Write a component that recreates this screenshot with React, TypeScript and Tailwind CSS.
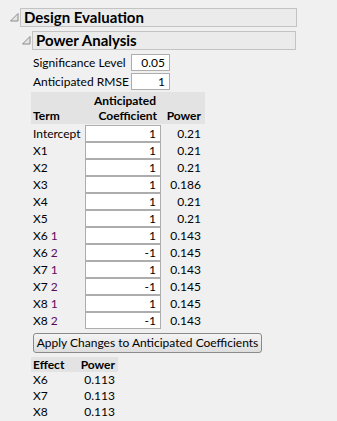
import React from "react";

const rows: { term: string; level?: string; coef: string; power: string }[] = [
  { term: "Intercept", coef: "1", power: "0.21" },
  { term: "X1", coef: "1", power: "0.21" },
  { term: "X2", coef: "1", power: "0.21" },
  { term: "X3", coef: "1", power: "0.186" },
  { term: "X4", coef: "1", power: "0.21" },
  { term: "X5", coef: "1", power: "0.21" },
  { term: "X6", level: "1", coef: "1", power: "0.143" },
  { term: "X6", level: "2", coef: "-1", power: "0.145" },
  { term: "X7", level: "1", coef: "1", power: "0.143" },
  { term: "X7", level: "2", coef: "-1", power: "0.145" },
  { term: "X8", level: "1", coef: "1", power: "0.145" },
  { term: "X8", level: "2", coef: "-1", power: "0.143" },
];

const effects = [
  { effect: "X6", power: "0.113" },
  { effect: "X7", power: "0.113" },
  { effect: "X8", power: "0.113" },
];

const Disclosure = () => (
  <div className="w-[10px] flex-shrink-0">
    <svg width="9" height="9" viewBox="0 0 9 9">
      <polygon points="8,0.5 8,8 0.5,8" fill="#e4e4e4" stroke="#8c8c8c" strokeWidth="1" />
    </svg>
  </div>
);

const OutlineHeader = ({ title, width }: { title: string; width: string }) => (
  <div className="flex items-center">
    <Disclosure />
    <div
      className={`${width} h-[19px] border border-[#c3c3c3] bg-[#ebebeb] pl-[3px] flex items-center text-[15px] font-bold text-black leading-none whitespace-nowrap`}
    >
      {title}
    </div>
  </div>
);

export default function App() {
  return (
    <div
      className="w-[337px] h-[421px] bg-[#f0f0f0] overflow-hidden pl-[10px] pt-[8px] text-[12px] text-black whitespace-nowrap"
      style={{ fontFamily: 'Lato, "Noto Sans", sans-serif' }}
    >
      <OutlineHeader title="Design Evaluation" width="w-[277px]" />

      <div className="ml-[12px] mt-[4px]">
        <OutlineHeader title="Power Analysis" width="w-[264px]" />

        <div className="ml-[9px] mt-[4px]">
          {/* Settings */}
          <div className="flex flex-col gap-[2px]">
            <div className="flex items-center">
              <span className="w-[100px] pl-[2px] leading-none">Significance Level</span>
              <div className="w-[39px] h-[17px] bg-white border border-[#adadad] pr-[4px] flex items-center justify-end leading-none">
                0.05
              </div>
            </div>
            <div className="flex items-center">
              <span className="w-[100px] pl-[2px] leading-none">Anticipated RMSE</span>
              <div className="w-[39px] h-[17px] bg-white border border-[#adadad] pr-[4px] flex items-center justify-end leading-none">
                1
              </div>
            </div>
          </div>

          {/* Coefficient table */}
          <div className="mt-[2px] w-[174px]">
            <div className="flex h-[32px] bg-[#e3e3e3] font-bold leading-[15px]">
              <div className="w-[54px] pl-[2px] flex items-end pb-[1px]">Term</div>
              <div className="w-[76px] pr-[4px] flex flex-col items-end justify-end pb-[1px]">
                <span className="pr-[1px]">Anticipated</span>
                <span>Coefficient</span>
              </div>
              <div className="w-[44px] pr-[4px] flex items-end justify-end pb-[1px]">Power</div>
            </div>
            <div className="mt-[1px]">
              {rows.map((r, i) => (
                <div key={i} className="flex h-[17px] items-center leading-none">
                  <div className="w-[54px] pl-[2px]">
                    {r.term}
                    {r.level && <span className="text-[#5c0a5c]"> {r.level}</span>}
                  </div>
                  <div className="w-[76px] h-[17px] bg-white border border-[#adadad] pr-[4px] flex items-center justify-end">
                    {r.coef}
                  </div>
                  <div className="w-[44px] pr-[4px] text-right">{r.power}</div>
                </div>
              ))}
            </div>
          </div>

          <button className="mt-[4px] ml-[2px] w-[229px] h-[20px] rounded-[3px] border border-[#8a8a8a] bg-gradient-to-b from-[#f4f4f4] to-[#dedede] text-[12px] leading-none text-black flex items-center justify-center">
            Apply Changes to Anticipated Coefficients
          </button>

          {/* Effect table */}
          <div className="mt-[4px] w-[87px]">
            <div className="flex h-[15px] bg-[#e3e3e3] font-bold items-center leading-none">
              <div className="w-[45px] pl-[2px]">Effect</div>
              <div className="w-[42px] pr-[3px] text-right">Power</div>
            </div>
            {effects.map((e) => (
              <div key={e.effect} className="flex h-[16px] items-center leading-none">
                <div className="w-[45px] pl-[2px]">{e.effect}</div>
                <div className="w-[42px] pr-[3px] text-right">{e.power}</div>
              </div>
            ))}
          </div>
        </div>
      </div>
    </div>
  );
}
